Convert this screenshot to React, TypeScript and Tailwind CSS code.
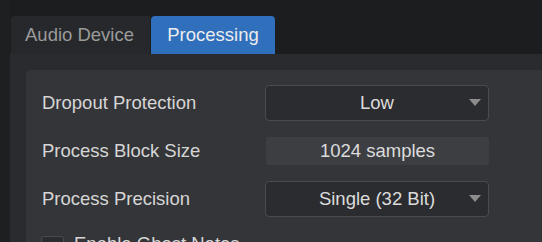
function Arrow() {
  return (
    <svg width="12" height="8" viewBox="0 0 12 8" className="absolute right-[7px] top-1/2 -translate-y-1/2">
      <path d="M0 0 L12 0 L6 7 Z" fill="#8c8c8c" />
    </svg>
  );
}

function Select({ value }: { value: string }) {
  return (
    <div className="relative w-[224px] h-[36px] shrink-0 rounded-[4px] border border-[#4a4b4f] bg-[#2b2c2f] flex items-center justify-center text-[#dcdcdc]">
      {value}
      <Arrow />
    </div>
  );
}

export default function App() {
  return (
    <div
      className="w-[542px] h-[242px] bg-[#1c1d1f] overflow-hidden flex text-[18.5px]"
      style={{ fontFamily: '"Liberation Sans", Arial, sans-serif' }}
    >
      <div className="w-[10px] shrink-0 bg-[#1e1f21]" />
      <div className="flex-1 flex flex-col pt-[16px] min-h-0">
        {/* tabs */}
        <div className="flex h-[38px] shrink-0 pl-[1px]">
          <div className="w-[139px] bg-[#26282b] rounded-tl-[4px] flex items-center pl-[14px] text-[#9b9b9b]">
            Audio Device
          </div>
          <div className="w-[124px] ml-[1px] bg-[#2f6fbb] rounded-t-[4px] flex items-center justify-center text-[#ececec]">
            Processing
          </div>
        </div>
        {/* panel */}
        <div className="flex-1 min-h-0 overflow-hidden bg-[#2a2b2e] pt-[16px] pl-[16px]">
          <div className="bg-[#343538] rounded-tl-[5px] pt-[15px] pb-[20px] pl-[16px] flex flex-col gap-[16px] text-[#d6d6d6]">
            <div className="flex items-center">
              <div className="w-[223px] shrink-0">Dropout Protection</div>
              <Select value="Low" />
            </div>
            <div className="flex items-center">
              <div className="w-[223px] shrink-0">Process Block Size</div>
              <div className="w-[223px] h-[28px] shrink-0 ml-[1px] rounded-[3px] bg-[#3d3e42] flex items-center justify-center text-[#dcdcdc]">
                1024 samples
              </div>
            </div>
            <div className="flex items-center">
              <div className="w-[223px] shrink-0">Process Precision</div>
              <Select value="Single (32 Bit)" />
            </div>
            <div className="flex items-start gap-[10px] pt-[3px] pl-[-1px]">
              <div className="w-[23px] h-[23px] -ml-[1px] rounded-[3px] border border-[#4a4b4f] bg-[#2b2c2f]" />
              <div className="leading-none -mt-[1px]">Enable Ghost Notes</div>
            </div>
          </div>
        </div>
      </div>
    </div>
  );
}
